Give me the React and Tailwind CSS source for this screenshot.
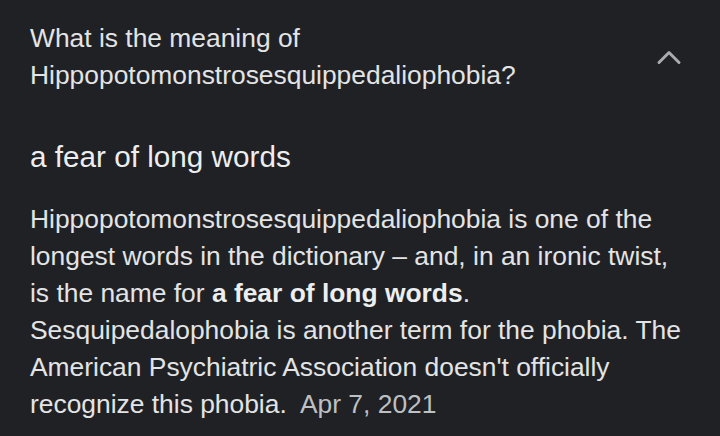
const BODY_LINES = [
  'Hippopotomonstrosesquippedaliophobia is one of the',
  'longest words in the dictionary \u2013 and, in an ironic twist,',
];

const App = () => {
  return (
    <div className="h-[436px] w-[720px] overflow-hidden bg-[#202124] font-['Liberation_Sans',Arial,sans-serif] text-[#e3e4e6]">
      {/* Question header */}
      <div className="flex items-center justify-between pt-[19.5px] pl-[30px] pr-[38px]">
        <h2 className="text-[26.4px] leading-[37.5px] font-normal">
          What is the meaning of Hippopotomonstrosesquippedaliophobia?
        </h2>
        <svg width="26" height="18" viewBox="0 0 26 18" className="shrink-0">
          <polyline
            points="3,14.5 13,4.5 23,14.5"
            fill="none"
            stroke="#a9abaf"
            strokeWidth="3"
            strokeLinecap="round"
            strokeLinejoin="round"
          />
        </svg>
      </div>

      {/* Answer */}
      <div className="pl-[30px] pr-6">
        <p className="mt-[44px] text-[29.7px] leading-[36px] text-[#eceef0]">a fear of long words</p>

        <p className="mt-[26px] text-[26.4px] leading-[37px]">
          {BODY_LINES.map((line) => (
            <span key={line}>
              {line}
              <br />
            </span>
          ))}
          is the name for <b className="font-bold text-[#eceef0]">a fear of long words</b>.
          <br />
          Sesquipedalophobia is another term for the phobia. The
          <br />
          American Psychiatric Association doesn't officially
          <br />
          recognize this phobia.{'\u00a0 '}
          <span className="text-[#bdc0c4]">Apr 7, 2021</span>
        </p>
      </div>
    </div>
  );
};

export default App;
